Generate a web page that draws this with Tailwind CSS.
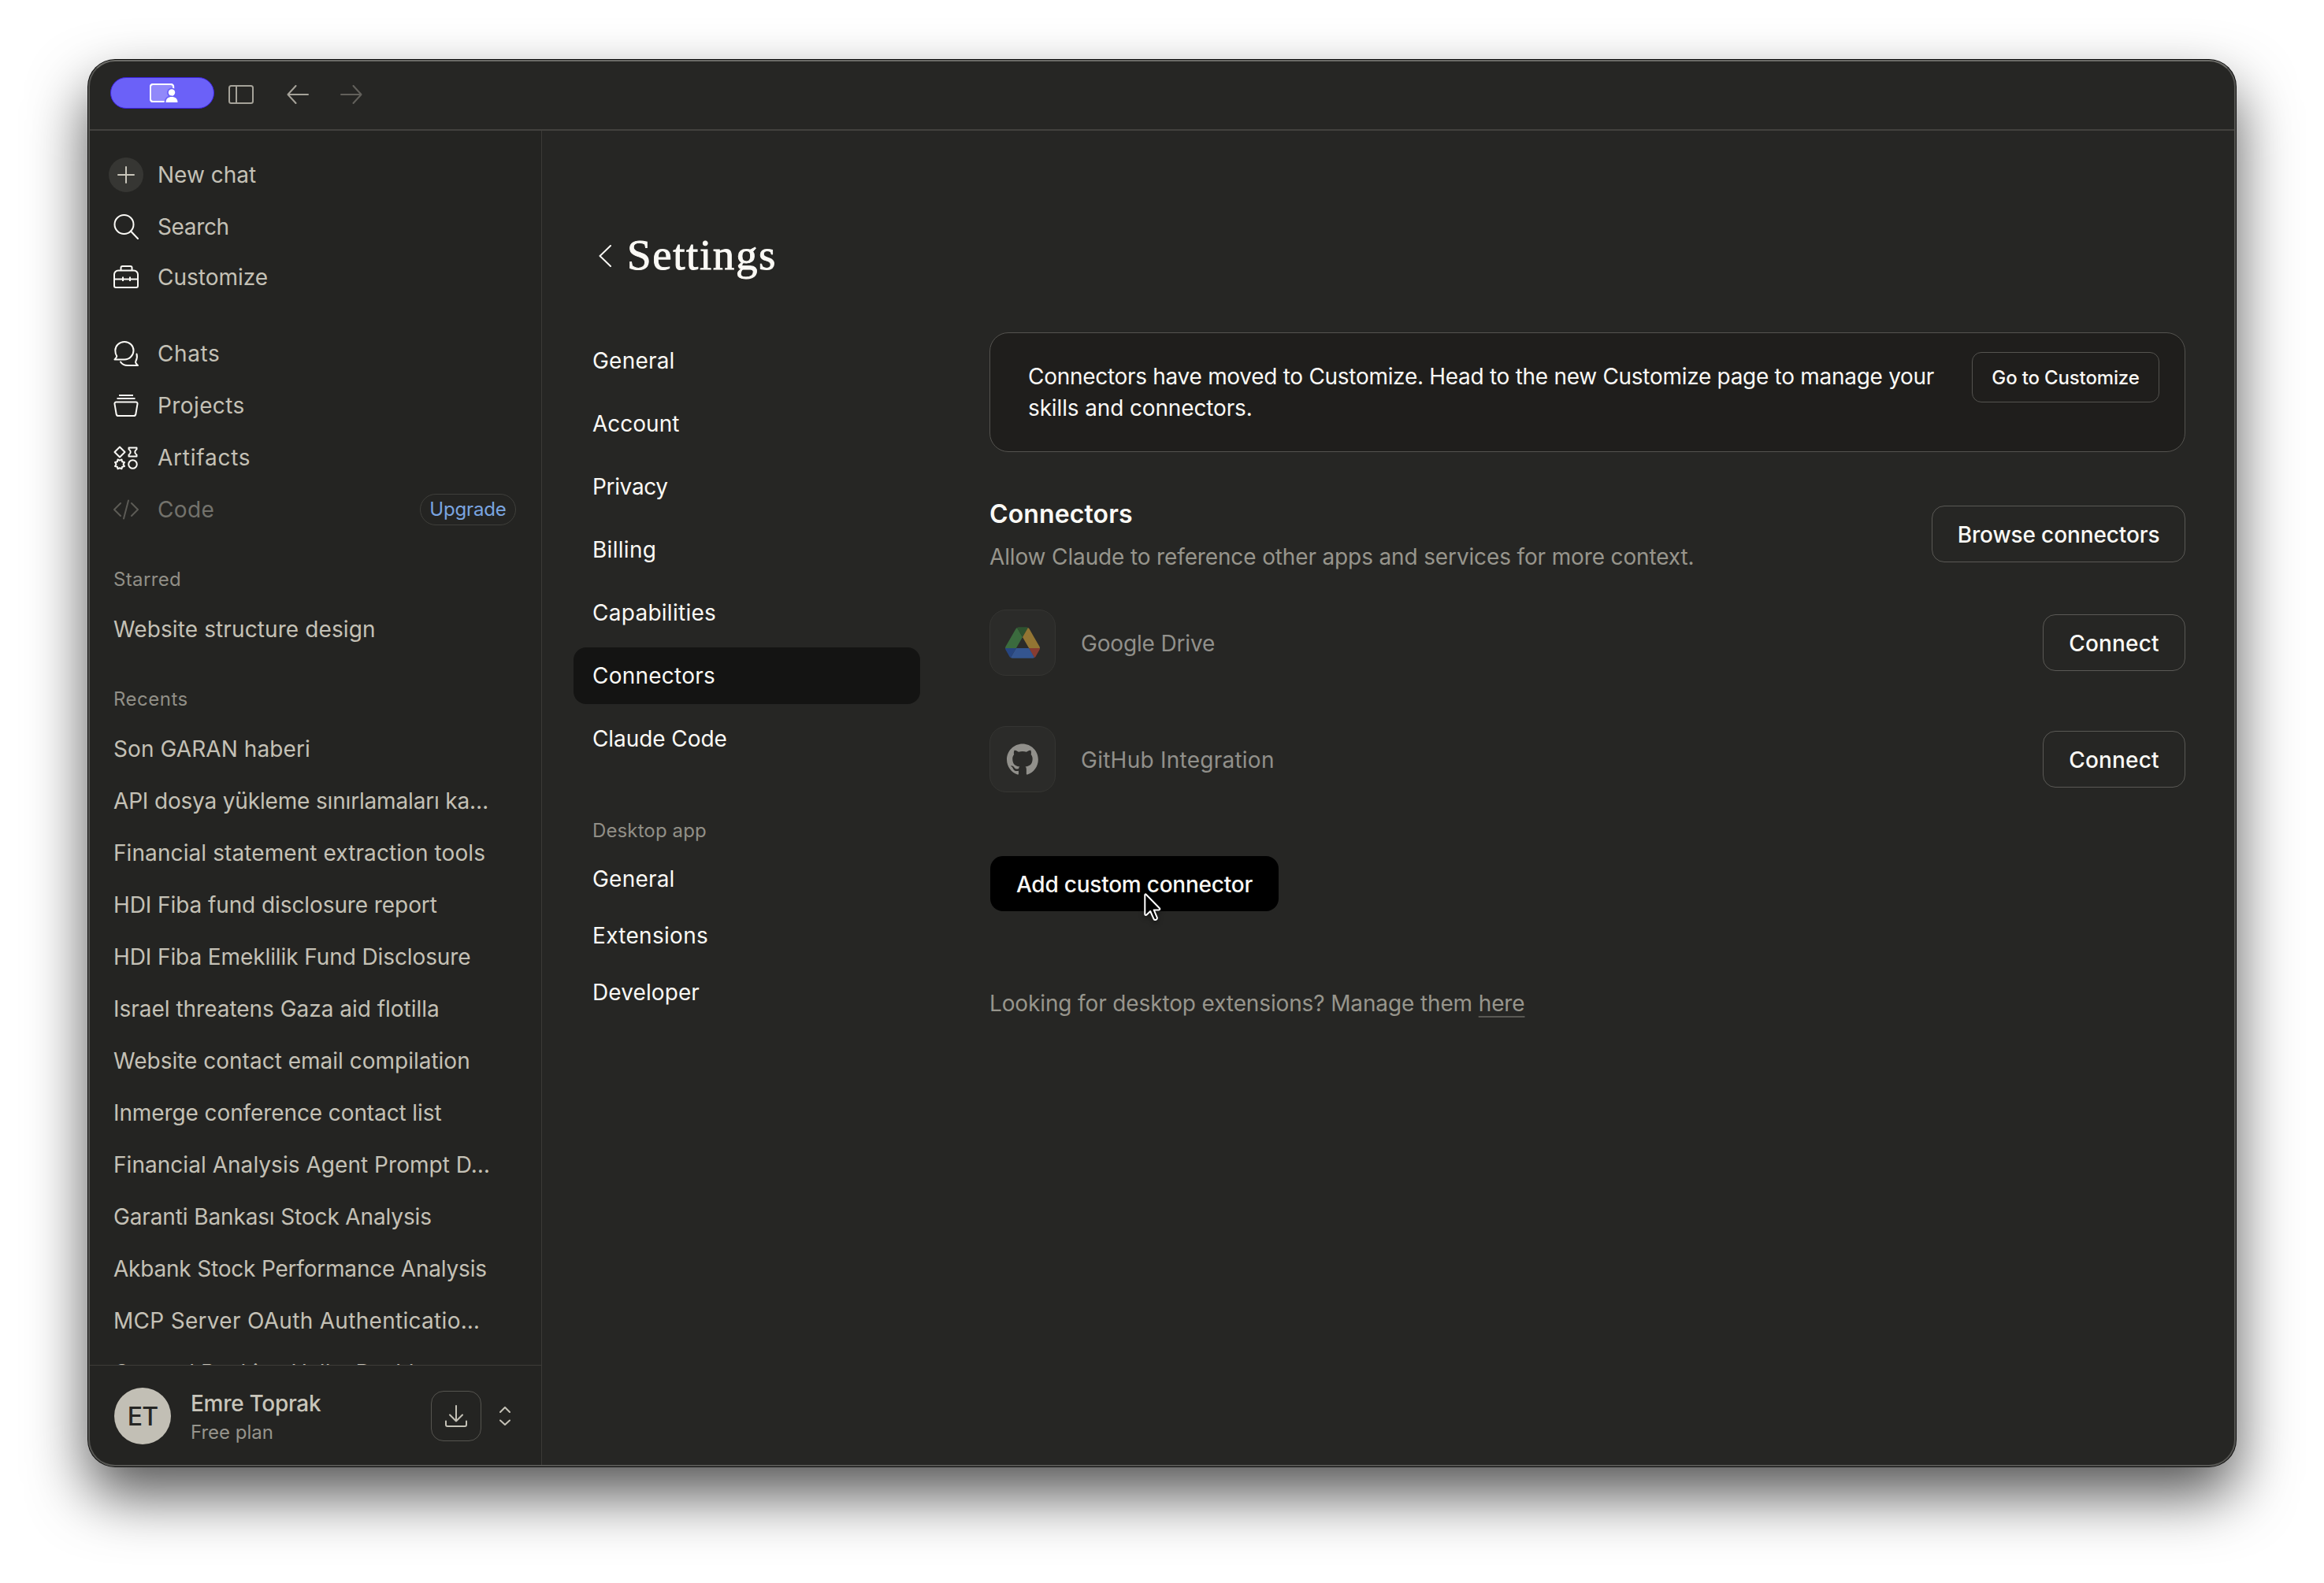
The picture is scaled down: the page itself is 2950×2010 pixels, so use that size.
<!DOCTYPE html>
<html lang="en">
<head>
<meta charset="utf-8">
<title>Settings</title>
<script src="https://cdn.jsdelivr.net/npm/@tailwindcss/browser@4"></script>
</head>
<body class="bg-white w-[2950px] h-[2010px] overflow-hidden pt-[76px] pl-[112px] font-['Inter',sans-serif] text-[28px] text-[#faf9f5]">
<div class="relative w-[2726px] h-[1786px] rounded-[34px] bg-[#262624] shadow-[0_0_0_1px_#0a0a0a,0_36px_74px_rgba(0,0,0,0.67)]">
<div class="w-full h-full rounded-[34px] overflow-hidden flex flex-col">

  <!-- Title bar -->
  <header class="h-[90px] shrink-0 border-b-2 border-[#42413e] flex items-start pl-7 pt-[22px]">
    <div class="w-[132px] h-10 rounded-full bg-[#6b61f8] border border-[#3c22e0] flex items-center justify-center">
      <svg class="w-9 h-6 -mt-px ml-1" viewBox="0 0 36 24" fill="none">
        <rect x="3" y="3" width="25" height="18" fill="#9189fa"/>
        <path d="M30 9V4a3 3 0 0 0-3-3H4a3 3 0 0 0-3 3v16a3 3 0 0 0 3 3h15" stroke="#fff" stroke-width="2.4"/>
        <circle cx="28" cy="11.500" r="6" fill="#6b61f8"/>
        <circle cx="28" cy="11.500" r="4.200" fill="#fff"/>
        <path d="M18.500 24c.5-6 4-8.500 9.500-8.500V24z" fill="#6b61f8"/>
        <path d="M20.500 24c0-4.500 3-7 7.500-7s7.500 2.500 7.500 7z" fill="#fff"/>
      </svg>
    </div>
    <svg class="w-8 h-6 ml-[18px] mt-[10px]" viewBox="0 0 32 24" fill="none" stroke="#a5a299" stroke-width="2"><rect x="1" y="1" width="30" height="22" rx="2.500"/><path d="M10 1v22"/></svg>
    <svg class="w-7 h-6 ml-[42px] mt-[10px]" viewBox="0 0 28 24" fill="none" stroke="#a5a299" stroke-width="2" stroke-linecap="round" stroke-linejoin="round"><path d="M27 12H1.500M11.500 1 1.500 12l10 11"/></svg>
    <svg class="w-7 h-6 ml-10 mt-[10px]" viewBox="0 0 28 24" fill="none" stroke="#62605b" stroke-width="2" stroke-linecap="round" stroke-linejoin="round"><path d="M1 12h25.500M16.500 1l10 11-10 11"/></svg>
  </header>

  <div class="flex-1 min-h-0 flex">
    <!-- Sidebar -->
    <aside class="w-[576px] shrink-0 border-r border-[#3b3a37] bg-[#242422] text-[#c4c1b6] flex flex-col">
      <div class="flex-1 min-h-0 overflow-hidden pt-6">
        <nav>
          <a class="flex items-center h-[65px] pl-[26px] gap-[18px]">
            <span class="-mt-px size-11 rounded-full bg-[#363633] flex items-center justify-center"><svg class="size-[22px]" viewBox="0 0 22 22" stroke="#c9c6bb" stroke-width="2" stroke-linecap="round"><path d="M11 1v20M1 11h20"/></svg></span>
            <span class="-mt-0.5">New chat</span>
          </a>
          <a class="flex items-center h-[65px] pl-8 gap-6">
            <svg class="size-8" viewBox="0 0 32 32" fill="none" stroke="#faf9f5" stroke-width="2" stroke-linecap="round"><circle cx="13.500" cy="13" r="12"/><path d="M22 21.500 31 31"/></svg>
            <span class="tracking-[-0.370px]">Search</span>
          </a>
          <a class="flex items-center h-[65px] pl-8 gap-6">
            <svg class="size-8 -mt-px" viewBox="0 0 32 32" fill="none" stroke="#faf9f5" stroke-width="2" stroke-linejoin="round"><path d="M1 12.500a5 5 0 0 1 5-5h20a5 5 0 0 1 5 5V27a2 2 0 0 1-2 2H3a2 2 0 0 1-2-2z"/><path d="M9.500 7.500V4a2 2 0 0 1 2-2h10a2 2 0 0 1 2 2v3.500M1 18.500h30M12 15.500v5.500M21 15.500v5.500"/></svg>
            <span class="-mt-0.5">Customize</span>
          </a>
        </nav>
        <nav class="mt-[31px]">
          <a class="flex items-center h-[66px] pl-8 gap-6">
            <svg class="size-8" viewBox="0 0 32 32" fill="none" stroke="#faf9f5" stroke-width="2" stroke-linejoin="round" stroke-linecap="round"><path d="M14 1C20.500 1 25.500 6 25.500 12S20.500 23.500 14 23.500H1.500C3 22 4.300 20.800 4.300 19.300 2.800 17.200 2.300 14.800 2.300 12 2.300 6 7.500 1 14 1z"/><path d="M9 26.500c2 3.200 5.200 4.500 9 4.500h13c-1.500-1.700-3.700-3-2.700-5.200 1.700-3 2-6.300 1.200-9.300"/></svg>
            <span class="tracking-[0.600px]">Chats</span>
          </a>
          <a class="flex items-center h-[66px] pl-8 gap-6">
            <svg class="size-8" viewBox="0 0 32 32" fill="none" stroke="#faf9f5" stroke-width="2" stroke-linejoin="round"><path d="M7 3h18M4.500 7h23M3.500 11.500h25a2 2 0 0 1 2 2.300L28.300 27a2.400 2.400 0 0 1-2.300 2H6a2.400 2.400 0 0 1-2.300-2L1.500 13.800a2 2 0 0 1 2-2.300z"/></svg>
            <span class="tracking-[0.400px]">Projects</span>
          </a>
          <a class="flex items-center h-[66px] pl-8 gap-6">
            <svg class="size-8" viewBox="0 0 32 32" fill="none" stroke="#faf9f5" stroke-width="2" stroke-linejoin="round"><path d="M8 2.500 14.500 9 8 15.500 1.500 9zM19.500 3.500h10v2c-3 2-3 5 0 7v2h-10v-2c3-2 3-5 0-7z"/><circle cx="24.500" cy="24.500" r="5.300"/><path d="m5.500 18.500 2.500 1.200 2.500-1.200.6 2.700 2.900.8-1.500 2.500 1.500 2.500-2.900.8-.6 2.500L8 29.300 5.500 30.300l-.6-2.500L2 27l1.500-2.500L2 22l2.900-.8z"/></svg>
            <span class="tracking-[0.750px]">Artifacts</span>
          </a>
          <a class="flex items-center h-[66px] pl-8 pr-8 gap-6 text-[#73726c]">
            <svg class="size-8" viewBox="0 0 32 32" fill="none" stroke="#5c5b56" stroke-width="2" stroke-linecap="round" stroke-linejoin="round"><path d="M9 8 1 16l8 8M23 8l8 8-8 8M19 4.500 13 27.500"/></svg>
            <span class="tracking-[0.370px]">Code</span>
            <span class="ml-auto w-[122px] h-10 rounded-full border border-[#3f3f3b] flex items-center justify-center text-[24px] tracking-[-0.160px] text-[#7aa5e0]">Upgrade</span>
          </a>
        </nav>

        <h2 class="mt-[34px] h-11 flex items-center pl-8 text-[24px] text-[#918f87] tracking-[0.350px]">Starred</h2>
        <div class="mt-2 h-[66px] flex items-center pl-8 tracking-[0.110px]">Website structure design</div>

        <h2 class="mt-[34px] h-11 flex items-center pl-8 text-[24px] text-[#918f87] tracking-[0.490px]">Recents</h2>
        <ul class="mt-2 whitespace-nowrap">
          <li class="h-[66px] flex items-center pl-8 tracking-[0.080px]">Son GARAN haberi</li>
          <li class="h-[66px] flex items-center pl-8 tracking-[-0.170px]">API dosya yükleme sınırlamaları ka…</li>
          <li class="h-[66px] flex items-center pl-8 tracking-[0.090px]">Financial statement extraction tools</li>
          <li class="h-[66px] flex items-center pl-8 tracking-[-0.090px]">HDI Fiba fund disclosure report</li>
          <li class="h-[66px] flex items-center pl-8 tracking-[-0.100px]">HDI Fiba Emeklilik Fund Disclosure</li>
          <li class="h-[66px] flex items-center pl-8 tracking-[-0.020px]">Israel threatens Gaza aid flotilla</li>
          <li class="h-[66px] flex items-center pl-8">Website contact email compilation</li>
          <li class="h-[66px] flex items-center pl-8 tracking-[-0.100px]">Inmerge conference contact list</li>
          <li class="h-[66px] flex items-center pl-8 tracking-[0.040px]">Financial Analysis Agent Prompt D…</li>
          <li class="h-[66px] flex items-center pl-8 tracking-[-0.130px]">Garanti Bankası Stock Analysis</li>
          <li class="h-[66px] flex items-center pl-8 tracking-[-0.200px]">Akbank Stock Performance Analysis</li>
          <li class="h-[66px] flex items-center pl-8 tracking-[0.300px]">MCP Server OAuth Authenticatio…</li>
          <li class="h-[66px] flex items-center pl-8">General Banking Halka Dashb…</li>
        </ul>
      </div>

      <div class="h-[129px] shrink-0 border-t border-[#3d3c39] flex items-center pl-[33px] pr-[39px]">
        <span class="size-[72px] rounded-full bg-[#c2bfb5] text-[#262624] text-[32px] font-medium tracking-[-0.800px] flex items-center justify-center pt-px">ET</span>
        <div class="ml-[25px] mt-[3px]">
          <div class="leading-[34px] font-medium tracking-[-0.290px] text-[#c8c5ba]">Emre Toprak</div>
          <div class="mt-1 leading-[32px] text-[24px] text-[#96948c]">Free plan</div>
        </div>
        <span class="ml-auto size-16 rounded-2xl border border-[#55544f] flex items-center justify-center">
          <svg class="size-7" viewBox="0 0 28 28" fill="none" stroke="#c4c1b6" stroke-width="2" stroke-linecap="round" stroke-linejoin="round"><path d="M14 1v19.500M6 12.500l8 8 8-8M1 20.500V25a2 2 0 0 0 2 2h22a2 2 0 0 0 2-2v-4.500"/></svg>
        </span>
        <svg class="ml-[23px] w-[14px] h-6" viewBox="0 0 14 24" fill="none" stroke="#c4c1b6" stroke-width="2" stroke-linecap="round" stroke-linejoin="round"><path d="m1 7 6-6 6 6M1 17.500l6 5.500 6-5.500"/></svg>
      </div>
    </aside>

    <!-- Main -->
    <main class="flex-1 min-w-0 pt-[126px] pl-10 pr-16">
      <div class="h-16 flex items-center pl-8">
        <svg class="w-4 h-7 mt-0.5" viewBox="0 0 16 28" fill="none" stroke="#faf9f5" stroke-width="2" stroke-linecap="round" stroke-linejoin="round"><path d="M15 1 1.500 14 15 27"/></svg>
        <h1 class="ml-5 -mt-0.5 font-['Liberation_Serif',serif] text-[55px] leading-none tracking-[1.600px] [-webkit-text-stroke:0.900px_#faf9f5]">Settings</h1>
      </div>

      <div class="mt-[66px] flex">
        <nav class="w-[440px] shrink-0">
          <div class="flex flex-col gap-2">
            <a class="h-[72px] flex items-center pl-6 tracking-[0.210px]">General</a>
            <a class="h-[72px] flex items-center pl-6">Account</a>
            <a class="h-[72px] flex items-center pl-6 tracking-[-0.340px]">Privacy</a>
            <a class="h-[72px] flex items-center pl-6 tracking-[0.300px]">Billing</a>
            <a class="h-[72px] flex items-center pl-6 tracking-[0.270px]">Capabilities</a>
            <a class="h-[72px] flex items-center pl-6 rounded-2xl bg-[#141413] tracking-[0.240px]">Connectors</a>
            <a class="h-[72px] flex items-center pl-6 tracking-[-0.080px]">Claude Code</a>
          </div>
          <h2 class="mt-[59px] h-11 flex items-center pl-6 text-[24px] text-[#918f87] tracking-[0.120px]">Desktop app</h2>
          <div class="mt-[3px]">
            <a class="h-[72px] flex items-center pl-6 tracking-[0.210px]">General</a>
            <a class="h-[72px] flex items-center pl-6 tracking-[0.300px]">Extensions</a>
            <a class="h-[72px] flex items-center pl-6 tracking-[0.100px]">Developer</a>
          </div>
        </nav>

        <section class="ml-[88px] flex-1">
          <div class="h-[152px] rounded-3xl border border-[#54534f] bg-[#1f1e1c] flex items-start pt-6 pl-12 pr-8">
            <p class="pt-[11px] leading-10 whitespace-nowrap"><span class="tracking-[-0.290px]">Connectors have moved to Customize. Head to the new Customize page to manage your</span><br><span class="tracking-[-0.140px]">skills and connectors.</span></p>
            <button class="ml-auto w-[238px] h-16 rounded-xl border border-[#54534f] text-[24px] font-medium tracking-[-0.150px] whitespace-nowrap pt-0.5">Go to Customize</button>
          </div>

          <div class="mt-[59px] flex items-start justify-between">
            <div>
              <h2 class="text-[32px] leading-10 font-semibold tracking-[0.120px]">Connectors</h2>
              <p class="mt-[14px] leading-10 text-[#97958c] tracking-[-0.140px]">Allow Claude to reference other apps and services for more context.</p>
            </div>
            <button class="mt-[9px] w-[322px] h-[72px] rounded-2xl border border-[#5a5955] font-medium tracking-[-0.120px] pt-0.5">Browse connectors</button>
          </div>

          <div class="mt-[47px] h-[84px] flex items-center">
            <span class="size-[84px] rounded-[21px] border border-[#353532] bg-[#2b2b29] flex items-center justify-center">
              <svg class="w-11 h-10" viewBox="0 0 87.300 78">
                <path d="m6.600 66.850 3.850 6.650c.8 1.400 1.950 2.500 3.300 3.300l13.750-23.800h-27.500c0 1.550.4 3.100 1.200 4.500z" fill="#27457f"/>
                <path d="m43.650 25-13.750-23.800c-1.350.8-2.500 1.900-3.300 3.300l-25.400 44a9.060 9.060 0 0 0 -1.200 4.500h27.500z" fill="#3b6b3e"/>
                <path d="m73.550 76.800c1.350-.8 2.500-1.900 3.300-3.300l1.600-2.750 7.650-13.250c.8-1.400 1.200-2.950 1.200-4.500h-27.500l5.850 11.500z" fill="#873c31"/>
                <path d="m43.650 25 13.750-23.800c-1.350-.8-2.900-1.200-4.500-1.200h-18.500c-1.600 0-3.150.45-4.500 1.200z" fill="#2e522f"/>
                <path d="m59.800 53h-32.300l-13.750 23.800c1.350.8 2.900 1.200 4.500 1.200h50.800c1.600 0 3.150-.45 4.500-1.200z" fill="#34558f"/>
                <path d="m73.400 26.500-12.700-22c-.8-1.400-1.950-2.500-3.300-3.300l-13.750 23.800 16.150 28h27.450c0-1.550-.4-3.100-1.200-4.500z" fill="#937533"/>
              </svg>
            </span>
            <span class="ml-8 mt-0.5 text-[#91908b] tracking-[-0.160px]">Google Drive</span>
            <button class="ml-auto w-[181px] h-[72px] rounded-2xl border border-[#5a5955] font-medium tracking-[0.150px] pt-0.5">Connect</button>
          </div>

          <div class="mt-16 h-[84px] flex items-center">
            <span class="size-[84px] rounded-[21px] border border-[#353532] bg-[#2b2b29] flex items-center justify-center">
              <svg class="size-10" viewBox="0 0 98 96"><path fill="#91908b" fill-rule="evenodd" clip-rule="evenodd" d="M48.854 0C21.839 0 0 22 0 49.217c0 21.756 13.993 40.172 33.405 46.690 2.427.49 3.316-1.059 3.316-2.362 0-1.141-.08-5.052-.08-9.127-13.590 2.934-16.420-5.867-16.420-5.867-2.184-5.704-5.420-7.170-5.420-7.170-4.448-3.015.324-3.015.324-3.015 4.934.326 7.523 5.052 7.523 5.052 4.367 7.496 11.404 5.378 14.235 4.074.404-3.178 1.699-5.378 3.074-6.600-10.839-1.141-22.243-5.378-22.243-24.283 0-5.378 1.940-9.778 5.014-13.200-.485-1.222-2.184-6.275.486-13.038 0 0 4.125-1.304 13.426 5.052a46.970 46.970 0 0 1 12.214-1.630c4.125 0 8.330.571 12.213 1.630 9.302-6.356 13.427-5.052 13.427-5.052 2.670 6.763.970 11.816.485 13.038 3.155 3.422 5.015 7.822 5.015 13.200 0 18.905-11.404 23.060-22.324 24.283 1.780 1.548 3.316 4.481 3.316 9.126 0 6.600-.08 11.897-.08 13.526 0 1.304.890 2.853 3.316 2.364 19.412-6.520 33.405-24.935 33.405-46.691C97.707 22 75.788 0 48.854 0z"/></svg>
            </span>
            <span class="ml-8 mt-0.5 text-[#91908b] tracking-[0.250px]">GitHub Integration</span>
            <button class="ml-auto w-[181px] h-[72px] rounded-2xl border border-[#5a5955] font-medium tracking-[0.150px] pt-0.5">Connect</button>
          </div>

          <div class="relative mt-[81px] ml-px w-[366px]">
            <button class="w-full h-[70px] rounded-2xl bg-black font-medium tracking-[-0.230px] pt-0.5">Add custom connector</button>
            <svg class="absolute left-[193px] top-[46px] w-7 h-10 drop-shadow-[0_3px_3px_rgba(0,0,0,0.4)]" viewBox="0 0 28 40" fill="#000" stroke="#fff" stroke-width="2" stroke-linejoin="round"><path d="M3.300 3.200v24.500c0 1.300 1.300 1.700 2.200.8l4.700-4.500 4.200 9.500c.6 1.300 1.800 1.800 3 1.300 1.300-.6 1.700-1.800 1.200-3.100l-3.900-9.300h6.300c1.200 0 1.700-1.200.9-2.200L4.800 2.700c-.7-.7-1.500-.4-1.500.5z"/></svg>
          </div>

          <p class="mt-[97px] leading-10 text-[#97958c] tracking-[-0.130px]">Looking for desktop extensions? Manage them <a class="underline decoration-2 underline-offset-[6px] decoration-[#5a5954]">here</a></p>
        </section>
      </div>
    </main>
  </div>
</div>
<div class="absolute inset-0 rounded-[34px] border-2 border-[#565653] border-t-[#6c6c68] pointer-events-none"></div>
</div>
</body>
</html>
